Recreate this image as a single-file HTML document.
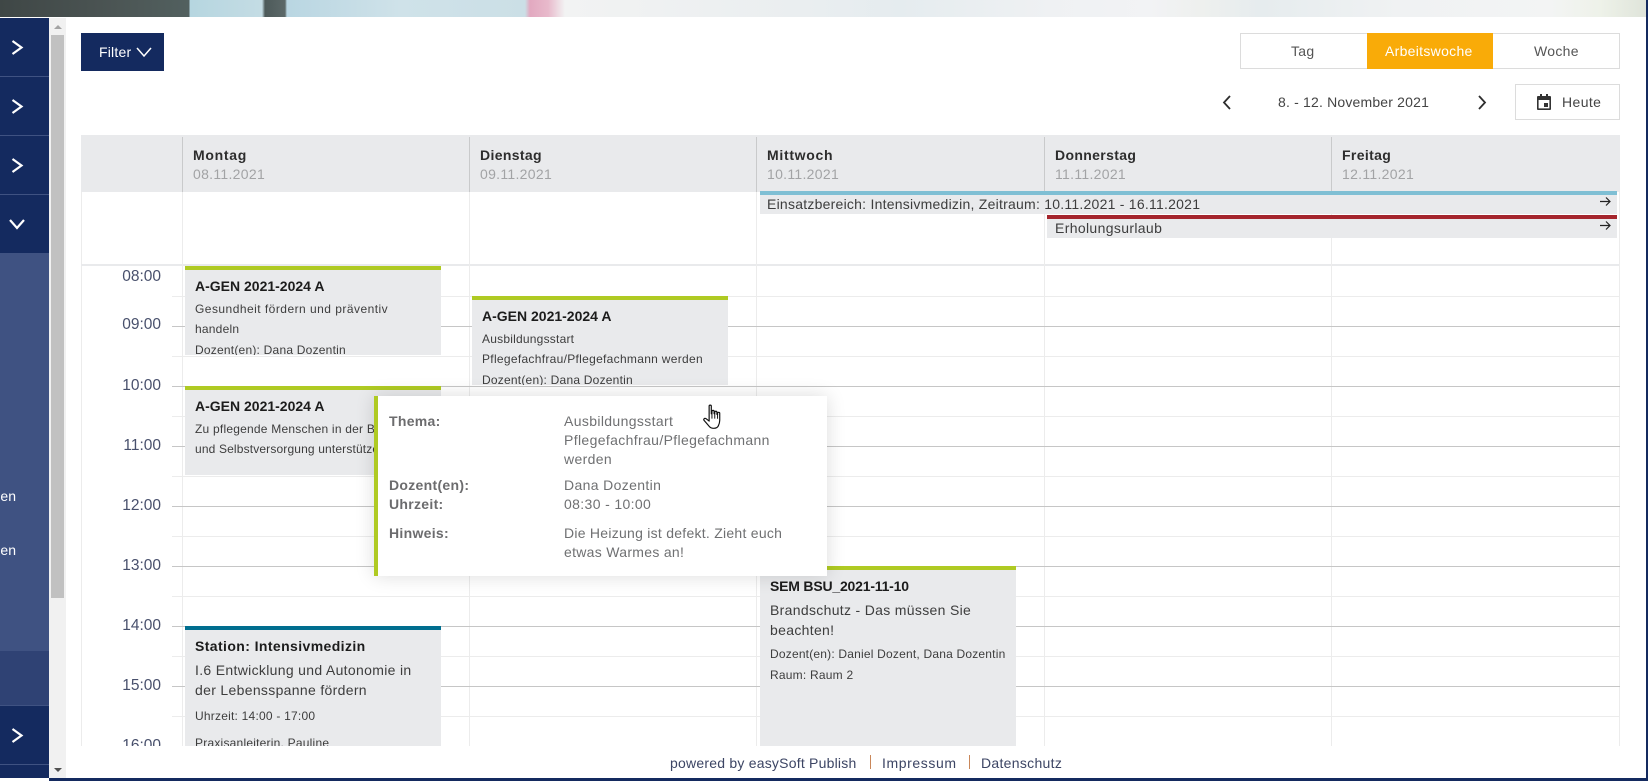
<!DOCTYPE html>
<html lang="de">
<head>
<meta charset="utf-8">
<title>Kalender</title>
<style>
html,body{margin:0;padding:0;width:1648px;height:781px;overflow:hidden;background:#fff;font-family:"Liberation Sans","DejaVu Sans",sans-serif;color:#333}
*{box-sizing:border-box}
.a{position:absolute}
.t{position:absolute;white-space:nowrap;line-height:20px;height:20px}
.lh{position:absolute;left:172px;width:1448px;height:1px;background:#ececec}
.lf{position:absolute;left:172px;width:1448px;height:1px;background:#c6c6c6}
.lv{position:absolute;width:1px;background:#ececec}
.hv{position:absolute;width:1px;top:137px;height:55px;background:#c9cacb}
.time{position:absolute;left:99px;width:62px;text-align:right;font-size:15.5px;line-height:20px;color:#48506c}
.day{position:absolute;font-size:14px;font-weight:bold;line-height:20px;color:#2d2d2d;letter-spacing:.35px;white-space:nowrap}
.date{position:absolute;font-size:14px;line-height:20px;color:#a2a3a5;letter-spacing:.3px;white-space:nowrap}
.ev{position:absolute;background:#e9eaec;border-top:4px solid #afca23;overflow:hidden}
.ev .t{left:10px}
.tt{font-size:14px;font-weight:bold;color:#1c1c1c;letter-spacing:.3px}
.s{font-size:12px;color:#3d3d3d;letter-spacing:.22px}
.m{font-size:14px;color:#3d3d3d;letter-spacing:.32px}
.pl{position:absolute;left:389px;font-size:14px;font-weight:bold;color:#6c6c6e;line-height:20px;letter-spacing:.3px;white-space:nowrap}
.pv{position:absolute;left:564px;font-size:14px;color:#6f7072;line-height:20px;letter-spacing:.36px;white-space:nowrap}
svg{position:absolute;overflow:visible}
</style>
</head>
<body>
<!-- banner -->
<div class="a" style="left:0;top:0;width:1646px;height:17px;background:linear-gradient(90deg,#3f4746 0,#4a5352 100px,#52605f 189px,#b6d6e0 190px,#c4dce4 262px,#4d5a5a 265px,#5c6868 285px,#b9d6e2 287px,#cfe2e9 400px,#cbdfe6 525px,#e2a9c0 530px,#e8b9cb 548px,#f2f3f3 565px,#eaeef0 800px,#e5ecef 900px,#eff1f3 1050px,#f2f3f5 1150px,#eef0ee 1200px,#e6ecee 1260px,#f0f2f3 1400px,#f3f4f4 1550px,#eef2e9 1600px,#dfe4da 1646px)"></div>

<!-- sidebar -->
<div class="a" style="left:0;top:18px;width:49px;height:760px;background:#142a5f"></div>
<div class="a" style="left:0;top:76px;width:49px;height:1px;background:#3f5282"></div>
<div class="a" style="left:0;top:135px;width:49px;height:1px;background:#3f5282"></div>
<div class="a" style="left:0;top:194px;width:49px;height:1px;background:#3f5282"></div>
<div class="a" style="left:0;top:253px;width:49px;height:398px;background:#3f5282"></div>
<div class="a" style="left:0;top:651px;width:49px;height:54px;background:#2f4274"></div>
<div class="a" style="left:0;top:705px;width:49px;height:1px;background:#3f5282"></div>
<div class="a" style="left:0;top:764px;width:49px;height:1px;background:#3f5282"></div>
<div class="t" style="left:0;top:486px;font-size:14px;color:#fff;width:16px;overflow:hidden;direction:rtl">en</div>
<div class="t" style="left:0;top:540px;font-size:14px;color:#fff;width:16px;overflow:hidden;direction:rtl">en</div>
<svg style="left:0;top:0" width="49" height="781" fill="none" stroke="#fff" stroke-width="2.2">
<path d="M12.5 41l9 6.500-9 6.500"/>
<path d="M12.5 100l9 6.500-9 6.500"/>
<path d="M12.5 159l9 6.500-9 6.500"/>
<path d="M10 220l7 8 7-8"/>
<path d="M12.5 729l9 6.500-9 6.500"/>
</svg>

<!-- scrollbar -->
<div class="a" style="left:49px;top:18px;width:17px;height:760px;background:#f1f1f1"></div>
<div class="a" style="left:51px;top:35px;width:13px;height:563px;background:#c1c1c1"></div>
<div class="a" style="left:54px;top:25px;width:0;height:0;border-left:4px solid transparent;border-right:4px solid transparent;border-bottom:4px solid #a3a3a3"></div>
<div class="a" style="left:54px;top:768px;width:0;height:0;border-left:4px solid transparent;border-right:4px solid transparent;border-top:4px solid #505050"></div>

<!-- edges -->
<div class="a" style="left:1646px;top:0;width:2px;height:781px;background:#142a5f"></div>
<div class="a" style="left:49px;top:778px;width:1599px;height:3px;background:#142a5f"></div>

<!-- filter -->
<div class="a" style="left:81px;top:33px;width:83px;height:38px;background:#142a5f"></div>
<div class="t" style="left:99px;top:42px;font-size:14px;color:#fff;letter-spacing:.2px">Filter</div>
<svg style="left:0;top:0" width="200" height="80" fill="none" stroke="#fff" stroke-width="1.5"><path d="M137 48l7 8 7-8"/></svg>

<!-- view switch -->
<div class="a" style="left:1240px;top:33px;width:380px;height:36px;border:1px solid #dcdcdc"></div>
<div class="a" style="left:1367px;top:33px;width:126px;height:36px;background:#f9ab08"></div>
<div class="t" style="left:1291px;top:41px;font-size:14px;color:#555;letter-spacing:.3px">Tag</div>
<div class="t" style="left:1385px;top:41px;font-size:14px;color:#fff;letter-spacing:.3px">Arbeitswoche</div>
<div class="t" style="left:1534px;top:41px;font-size:14px;color:#555;letter-spacing:.3px">Woche</div>

<!-- date nav -->
<svg style="left:0;top:0" width="1648" height="130" fill="none" stroke="#2d2d2d" stroke-width="1.8"><path d="M1230 96l-6 6.500 6 6.500"/><path d="M1479 96l6 6.500-6 6.500"/></svg>
<div class="t" style="left:1278px;top:92px;font-size:14px;color:#444;letter-spacing:.18px">8. - 12. November 2021</div>
<div class="a" style="left:1515px;top:84px;width:105px;height:36px;border:1px solid #dcdcdc"></div>
<svg style="left:1536px;top:94px" width="16" height="16"><path fill="#333" d="M2 2h2V0h2v2h4V0h2v2h2a1 1 0 0 1 1 1v12a1 1 0 0 1-1 1H2a1 1 0 0 1-1-1V3a1 1 0 0 1 1-1zm.6 4v8.400h10.800V6zM8 9h4v4H8z"/></svg>
<div class="t" style="left:1562px;top:92px;font-size:14px;color:#444;letter-spacing:.4px">Heute</div>

<!-- table header -->
<div class="a" style="left:81px;top:135px;width:1539px;height:57px;background:#e9eaec"></div>
<div class="hv" style="left:182px"></div>
<div class="hv" style="left:469px"></div>
<div class="hv" style="left:756px"></div>
<div class="hv" style="left:1044px"></div>
<div class="hv" style="left:1331px"></div>
<div class="day" style="left:193px;top:145px;letter-spacing:.7px">Montag</div><div class="date" style="left:193px;top:164px">08.11.2021</div>
<div class="day" style="left:480px;top:145px">Dienstag</div><div class="date" style="left:480px;top:164px">09.11.2021</div>
<div class="day" style="left:767px;top:145px;letter-spacing:.7px">Mittwoch</div><div class="date" style="left:767px;top:164px">10.11.2021</div>
<div class="day" style="left:1055px;top:145px">Donnerstag</div><div class="date" style="left:1055px;top:164px">11.11.2021</div>
<div class="day" style="left:1342px;top:145px">Freitag</div><div class="date" style="left:1342px;top:164px">12.11.2021</div>

<!-- grid -->
<div class="a" style="left:81px;top:192px;width:1px;height:554px;background:#ececec"></div>
<div class="a" style="left:81px;top:264px;width:1539px;height:2px;background:#e9eaec"></div>
<div class="lv" style="left:182px;top:192px;height:554px"></div>
<div class="lv" style="left:469px;top:192px;height:554px"></div>
<div class="lv" style="left:756px;top:192px;height:554px"></div>
<div class="lv" style="left:1044px;top:192px;height:554px"></div>
<div class="lv" style="left:1331px;top:192px;height:554px"></div>
<div class="lv" style="left:1619px;top:192px;height:554px"></div>
<div class="lh" style="top:296px"></div><div class="lf" style="top:326px"></div>
<div class="lh" style="top:356px"></div><div class="lf" style="top:386px"></div>
<div class="lh" style="top:416px"></div><div class="lf" style="top:446px"></div>
<div class="lh" style="top:476px"></div><div class="lf" style="top:506px"></div>
<div class="lh" style="top:536px"></div><div class="lf" style="top:566px"></div>
<div class="lh" style="top:596px"></div><div class="lf" style="top:626px"></div>
<div class="lh" style="top:656px"></div><div class="lf" style="top:686px"></div>
<div class="lh" style="top:716px"></div>

<div class="time" style="top:267px">08:00</div>
<div class="time" style="top:315px">09:00</div>
<div class="time" style="top:376px">10:00</div>
<div class="time" style="top:436px">11:00</div>
<div class="time" style="top:496px">12:00</div>
<div class="time" style="top:556px">13:00</div>
<div class="time" style="top:616px">14:00</div>
<div class="time" style="top:676px">15:00</div>
<div class="a" style="left:99px;top:736px;width:62px;height:10px;overflow:hidden"><div class="time" style="left:0;top:0">16:00</div></div>

<!-- all-day -->
<div class="a" style="left:760px;top:191px;width:857px;height:23px;background:#e9eaec;border-top:4px solid #7fbfd4"></div>
<div class="t" style="left:767px;top:194px;font-size:14px;color:#3d3d3d;letter-spacing:.24px">Einsatzbereich: Intensivmedizin, Zeitraum: 10.11.2021 - 16.11.2021</div>
<div class="a" style="left:1047px;top:215px;width:570px;height:23px;background:#e9eaec;border-top:4px solid #a5252d"></div>
<div class="t" style="left:1055px;top:218px;font-size:14px;color:#3d3d3d;letter-spacing:.35px">Erholungsurlaub</div>
<svg style="left:0;top:0" width="1648" height="240" fill="none" stroke="#222" stroke-width="1.2"><path d="M1600 201.500h10M1606 197.500l4 4-4 4"/><path d="M1600 225.500h10M1606 221.500l4 4-4 4"/></svg>

<!-- events -->
<div class="ev" style="left:185px;top:266px;width:256px;height:89px">
  <div class="t tt" style="top:6px;letter-spacing:0">A-GEN 2021-2024 A</div>
  <div class="t s" style="top:29px;letter-spacing:.47px">Gesundheit fördern und präventiv</div>
  <div class="t s" style="top:49px">handeln</div>
  <div class="t s" style="top:70px">Dozent(en): Dana Dozentin</div>
</div>
<div class="ev" style="left:472px;top:296px;width:256px;height:89px">
  <div class="t tt" style="top:6px;letter-spacing:0">A-GEN 2021-2024 A</div>
  <div class="t s" style="top:29px">Ausbildungsstart</div>
  <div class="t s" style="top:49px;letter-spacing:.3px">Pflegefachfrau/Pflegefachmann werden</div>
  <div class="t s" style="top:70px">Dozent(en): Dana Dozentin</div>
</div>
<div class="ev" style="left:185px;top:386px;width:256px;height:89px">
  <div class="t tt" style="top:6px;letter-spacing:0">A-GEN 2021-2024 A</div>
  <div class="t s" style="top:29px">Zu pflegende Menschen in der Bewegung</div>
  <div class="t s" style="top:49px;letter-spacing:.15px">und Selbstversorgung unterstützen</div>
</div>
<div class="ev" style="left:185px;top:626px;width:256px;height:120px;border-top-color:#006e8f">
  <div class="t tt" style="top:6px;letter-spacing:.4px">Station: Intensivmedizin</div>
  <div class="t m" style="top:30px">I.6 Entwicklung und Autonomie in</div>
  <div class="t m" style="top:50px">der Lebensspanne fördern</div>
  <div class="t s" style="top:76px">Uhrzeit: 14:00 - 17:00</div>
  <div class="t s" style="top:103px">Praxisanleiterin, Pauline</div>
</div>
<div class="ev" style="left:760px;top:566px;width:256px;height:180px">
  <div class="t tt" style="top:6px;letter-spacing:-.2px">SEM BSU_2021-11-10</div>
  <div class="t m" style="top:30px">Brandschutz - Das müssen Sie</div>
  <div class="t m" style="top:50px">beachten!</div>
  <div class="t s" style="top:74px;letter-spacing:.2px">Dozent(en): Daniel Dozent, Dana Dozentin</div>
  <div class="t s" style="top:95px">Raum: Raum 2</div>
</div>

<!-- popup -->
<div class="a" style="left:374px;top:396px;width:453px;height:180px;background:#fff;border-left:4px solid #afca23;box-shadow:0 0 18px rgba(0,0,0,.14)"></div>
<div class="pl" style="top:411px">Thema:</div>
<div class="pv" style="top:411px">Ausbildungsstart</div>
<div class="pv" style="top:430px">Pflegefachfrau/Pflegefachmann</div>
<div class="pv" style="top:449px">werden</div>
<div class="pl" style="top:475px">Dozent(en):</div>
<div class="pv" style="top:475px">Dana Dozentin</div>
<div class="pl" style="top:494px">Uhrzeit:</div>
<div class="pv" style="top:494px">08:30 - 10:00</div>
<div class="pl" style="top:523px">Hinweis:</div>
<div class="pv" style="top:523px;letter-spacing:.26px">Die Heizung ist defekt. Zieht euch</div>
<div class="pv" style="top:542px;letter-spacing:.3px">etwas Warmes an!</div>

<!-- hand cursor -->
<svg style="left:703px;top:404px" width="22" height="27" viewBox="0 0 20 25"><path fill="#fff" stroke="#111" stroke-width="1.1" stroke-linejoin="round" d="M5.5 2c0-1.300 2-1.300 2 0v7l.6-.2V6.800c0-1.200 2-1.200 2 0V9l.6.100V7.600c0-1.200 2-1.200 2 0v2l.6.200V8.600c0-1.200 2-1.200 2 0V15c0 2-.5 3.500-1.200 5-.5 1.300-1.800 2.500-4.300 2.500-2.400 0-3.600-.8-4.600-2.200L.8 15.200c-.8-1 .4-2.500 1.700-1.700l3 2.300z"/><path fill="none" stroke="#111" stroke-width=".9" d="M8.100 9v4.500M10.700 9v4.500M13.300 9.600v4"/></svg>

<!-- footer -->
<div class="a" style="left:66px;top:746px;width:1580px;height:32px;background:#fff"></div>
<div class="t" style="left:670px;top:753px;font-size:14px;color:#3c4564;letter-spacing:.22px">powered by easySoft Publish</div>
<div class="a" style="left:870px;top:755px;width:1px;height:14px;background:#c9875a"></div>
<div class="t" style="left:882px;top:753px;font-size:14px;color:#3c4564;letter-spacing:.6px">Impressum</div>
<div class="a" style="left:969px;top:755px;width:1px;height:14px;background:#c9875a"></div>
<div class="t" style="left:981px;top:753px;font-size:14px;color:#3c4564;letter-spacing:.3px">Datenschutz</div>
</body>
</html>
